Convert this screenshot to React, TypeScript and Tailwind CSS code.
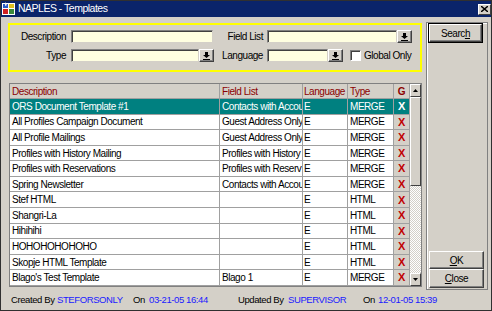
import React from 'react';

type Row = { d: string; f: string; l: string; t: string };

const rows: Row[] = [
  { d: 'ORS Document Template #1', f: 'Contacts with Accou', l: 'E', t: 'MERGE' },
  { d: 'All Profiles Campaign Document', f: 'Guest Address Only', l: 'E', t: 'MERGE' },
  { d: 'All Profile Mailings', f: 'Guest Address Only', l: 'E', t: 'MERGE' },
  { d: 'Profiles with History Mailing', f: 'Profiles with History', l: 'E', t: 'MERGE' },
  { d: 'Profiles with Reservations', f: 'Profiles with Reserv', l: 'E', t: 'MERGE' },
  { d: 'Spring Newsletter', f: 'Contacts with Accou', l: 'E', t: 'MERGE' },
  { d: 'Stef HTML', f: '', l: 'E', t: 'HTML' },
  { d: 'Shangri-La', f: '', l: 'E', t: 'HTML' },
  { d: 'Hihihihi', f: '', l: 'E', t: 'HTML' },
  { d: 'HOHOHOHOHOHO', f: '', l: 'E', t: 'HTML' },
  { d: 'Skopje HTML Template', f: '', l: 'E', t: 'HTML' },
  { d: "Blago's Test Template", f: 'Blago 1', l: 'E', t: 'MERGE' },
];

const AppIcon = () => (
  <svg width="14" height="14" viewBox="0 0 14 14">
    <rect x="0" y="1" width="13" height="12" fill="#ffffff" />
    <rect x="1" y="2" width="5" height="4" fill="#2a5cc8" />
    <rect x="7" y="2" width="5" height="4" fill="#e0c020" />
    <rect x="1" y="7" width="5" height="5" fill="#d02020" />
    <rect x="7" y="7" width="5" height="5" fill="#3a8a3a" />
    <path d="M3 0l2 3-2 1z" fill="#f0f0f0" />
  </svg>
);

const DropBtn = () => (
  <div className="w-[15px] h-[13px] shrink-0 bg-[#d4d0c8] border border-t-white border-l-white border-r-[#404040] border-b-[#404040] shadow-[inset_-1px_-1px_0_#808080] flex items-center justify-center">
    <svg width="7" height="8" viewBox="0 0 7 8">
      <path d="M2 0h3v3h2L3.5 6 0 3h2z" fill="#000" />
      <rect x="0" y="7" width="7" height="1" fill="#000" />
    </svg>
  </div>
);

const Field = ({ w }: { w: string }) => (
  <div className={`${w} h-[13px] shrink-0 bg-[#ffffe1] border border-t-[#808080] border-l-[#808080] border-r-[#d4d0c8] border-b-[#d4d0c8] shadow-[inset_1px_1px_0_#404040]`} />
);

const Cell = ({ w, children, cls }: { w: string; children?: React.ReactNode; cls?: string }) => (
  <div className={`${w} shrink-0 h-full border-r border-[#a0a0a0] pl-[2px] flex items-center overflow-hidden whitespace-nowrap ${cls ?? ''}`}>
    {children}
  </div>
);

const App: React.FC = () => {
  return (
    <div className="w-[492px] h-[311px] bg-[#d4d0c8] border border-[#303030] flex flex-col overflow-hidden text-black text-[10px] tracking-[-0.45px] font-['Liberation_Sans',Arial,sans-serif]">
      {/* Title bar */}
      <div className="h-[16px] shrink-0 bg-[#0a246a] flex items-center pl-[1px]">
        <AppIcon />
        <span className="ml-[2px] text-white text-[10.5px] tracking-[-0.5px]">NAPLES - Templates</span>
        <div className="ml-auto w-[13px] h-[11px] bg-[#d4d0c8] border border-t-white border-l-white border-r-[#404040] border-b-[#404040] flex items-center justify-center">
          <svg width="7" height="6" viewBox="0 0 7 6">
            <path d="M0 0l7 6M7 0L0 6" stroke="#000" strokeWidth="1.4" />
          </svg>
        </div>
      </div>

      {/* Body */}
      <div className="h-[273px] shrink-0 flex pl-[7px] pt-[5px]">
        <div className="w-[414px] flex flex-col">
          {/* Search criteria */}
          <div className="mt-[1px] h-[49px] border-2 border-[#ffff00] pt-[5px] flex flex-col gap-[6px]">
            <div className="flex items-center h-[13px]">
              <span className="w-[56px] text-right">Description</span>
              <div className="ml-[5px] flex"><Field w="w-[142px]" /></div>
              <span className="w-[50px] text-right">Field List</span>
              <div className="ml-[4px] flex">
                <Field w="w-[130px]" />
                <DropBtn />
              </div>
            </div>
            <div className="flex items-center h-[13px]">
              <span className="w-[56px] text-right">Type</span>
              <div className="ml-[5px] flex">
                <Field w="w-[128px]" />
                <DropBtn />
              </div>
              <span className="w-[49px] text-right">Language</span>
              <div className="ml-[4px] flex">
                <Field w="w-[61px]" />
                <DropBtn />
              </div>
              <div className="ml-[7px] w-[11px] h-[11px] bg-white border border-t-[#808080] border-l-[#808080] border-r-white border-b-white shadow-[inset_1px_1px_0_#404040]" />
              <span className="ml-[3px]">Global Only</span>
            </div>
          </div>

          {/* Grid */}
          <div className="mt-[11px] ml-[1px] w-[413px] h-[204px] border border-[#808080] flex">
            <div className="w-[400px] flex flex-col">
              <div className="h-[15px] flex bg-[#d4d0c8] border-b border-[#a0a0a0] text-[#8b0000]">
                <Cell w="w-[210px]">Description</Cell>
                <Cell w="w-[83px]">Field List</Cell>
                <Cell w="w-[45px]" cls="!pl-[1px]">Language</Cell>
                <Cell w="w-[46px]">Type</Cell>
                <Cell w="w-[16px]" cls="justify-center !pl-0 font-bold">G</Cell>
              </div>
              {rows.map((r, i) => {
                const sel = i === 0;
                return (
                  <div
                    key={i}
                    className={`h-[15.58px] flex border-b border-[#a0a0a0] ${sel ? 'bg-[#008080] text-white' : 'bg-white'}`}
                  >
                    <Cell w="w-[210px]">{r.d}</Cell>
                    <Cell w="w-[83px]">{r.f}</Cell>
                    <Cell w="w-[45px]" cls="!pl-[1px]">{r.l}</Cell>
                    <Cell w="w-[46px]">{r.t}</Cell>
                    <Cell w="w-[16px]" cls={`justify-center !pl-0 font-bold text-[11px] ${sel ? 'text-white' : 'bg-[#d4d0c8] text-[#c00000]'}`}>
                      X
                    </Cell>
                  </div>
                );
              })}
            </div>
            {/* Scrollbar */}
            <div className="w-[11px] flex flex-col bg-[repeating-conic-gradient(#ffffff_0%_25%,#d4d0c8_0%_50%)] bg-[length:2px_2px]">
              <div className="h-[13px] bg-[#d4d0c8] border border-t-white border-l-white border-r-[#404040] border-b-[#404040] flex items-center justify-center">
                <svg width="5" height="3" viewBox="0 0 5 3"><path d="M2.5 0L5 3H0z" fill="#000" /></svg>
              </div>
              <div className="h-[89px] bg-[#d4d0c8] border border-t-white border-l-white border-r-[#404040] border-b-[#404040]" />
              <div className="mt-auto h-[13px] bg-[#d4d0c8] border border-t-white border-l-white border-r-[#404040] border-b-[#404040] flex items-center justify-center">
                <svg width="5" height="3" viewBox="0 0 5 3"><path d="M0 0h5L2.5 3z" fill="#000" /></svg>
              </div>
            </div>
          </div>
        </div>

        {/* Button panel */}
        <div className="ml-[4px] w-[62px] h-[268px] border border-[#808080] shadow-[inset_1px_1px_0_#ffffff] flex flex-col">
          <div className="ml-[1px] w-[55px] h-[20px] border border-black">
            <div className="w-full h-full border border-t-white border-l-white border-r-[#404040] border-b-[#404040] shadow-[inset_-1px_-1px_0_#808080] flex items-center justify-center">
              <span>Searc<u>h</u></span>
            </div>
          </div>
          <div className="mt-auto ml-[2px] mb-[1px] flex flex-col">
            <div className="w-[55px] h-[18px] border border-t-white border-l-white border-r-[#404040] border-b-[#404040] shadow-[inset_-1px_-1px_0_#808080] flex items-center justify-center">
              <span><u>O</u>K</span>
            </div>
            <div className="w-[55px] h-[19px] border border-t-white border-l-white border-r-[#404040] border-b-[#404040] shadow-[inset_-1px_-1px_0_#808080] flex items-center justify-center">
              <span><u>C</u>lose</span>
            </div>
          </div>
        </div>
      </div>

      {/* Footer */}
      <div className="flex-1 flex items-center pl-[10px] whitespace-nowrap text-[9.5px] tracking-[-0.4px]">
        <span className="w-[46px] shrink-0">Created By</span>
        <span className="w-[76px] shrink-0 text-[#1a1aff]">STEFORSONLY</span>
        <span className="w-[16px] shrink-0">On</span>
        <span className="w-[89px] shrink-0 text-[#1a1aff]">03-21-05 16:44</span>
        <span className="w-[50px] shrink-0">Updated By</span>
        <span className="w-[75px] shrink-0 text-[#1a1aff]">SUPERVISOR</span>
        <span className="w-[15px] shrink-0">On</span>
        <span className="text-[#1a1aff]">12-01-05 15:39</span>
      </div>
    </div>
  );
};

export default App;
